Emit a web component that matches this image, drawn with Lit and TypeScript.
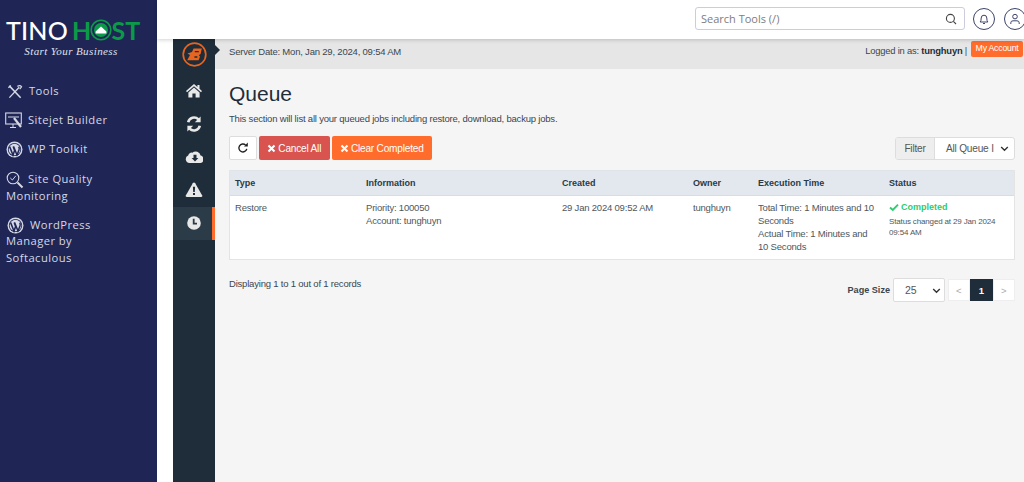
import { LitElement, html, css, svg } from "lit";
import { customElement } from "lit/decorators.js";

const wp = html`<svg class="ico" width="17" height="17" viewBox="0 0 17 17"><circle cx="8.5" cy="8.5" r="8" fill="#d5d8e6"/><circle cx="8.5" cy="8.5" r="6.6" fill="#1f2656" /><circle cx="8.5" cy="8.5" r="5.8" fill="#d5d8e6"/><path d="M3.6 5.6 L7 14 L8.6 9.4 L7.2 5.6 M7.6 5.6 L11 14 L13 9 Q13.6 7.4 12.8 5.6" fill="none" stroke="#1f2656" stroke-width="1.5"/></svg>`;

const home = svg`<path d="M9 2 L1 9 L2 10.2 L9 4.2 L16 10.2 L17 9 L14.5 6.8 V3 H12.4 V5 Z" fill="currentColor"/><path d="M9 5.6 L3.4 10.4 V15.5 H7.4 V11.5 H10.6 V15.5 H14.6 V10.4 Z" fill="currentColor"/>`;
const sync = svg`<path d="M3.2 7.2 A6 6 0 0 1 13.4 4.4" fill="none" stroke="currentColor" stroke-width="2.6"/><path d="M15.6 1.4 V7.2 H9.8 Z" fill="currentColor"/><path d="M14.8 10.8 A6 6 0 0 1 4.6 13.6" fill="none" stroke="currentColor" stroke-width="2.6"/><path d="M2.4 16.6 V10.8 H8.2 Z" fill="currentColor"/>`;
const cloud = svg`<path d="M4.4 15 A3.9 3.9 0 0 1 3.2 7.5 A3.4 3.4 0 0 1 7.4 4.7 A5 5 0 0 1 15.6 7.6 A3.8 3.8 0 0 1 15.6 15 Z" fill="currentColor"/><path d="M8.5 6.8 H11.5 V10 H13.4 L10 13.6 L6.6 10 H8.5 Z" fill="#1f2d3a"/>`;
const warn = svg`<path d="M9 1.5 Q9.8 1.5 10.2 2.2 L17.2 14.6 Q17.8 16 16.2 16 H1.8 Q0.2 16 0.8 14.6 L7.8 2.2 Q8.2 1.5 9 1.5 Z" fill="currentColor"/><path d="M7.9 5.8 H10.1 L9.8 11 H8.2 Z M8 12 H10 V14 H8 Z" fill="#1f2d3a"/>`;
const clock = svg`<circle cx="9" cy="9" r="6.8" fill="currentColor"/><path d="M8.7 4.8 V9.6 H12" fill="none" stroke="#2b3b48" stroke-width="1.8"/>`;
const s = (c: unknown) => html`<svg width="18" height="18" viewBox="0 0 18 18">${c}</svg>`;

@customElement("app-root")
export class AppRoot extends LitElement {
  static styles = css`
    :host { display: block; width: 1024px; height: 482px; overflow: hidden; font-family: "Liberation Sans", Arial, sans-serif; font-size: 9.5px; letter-spacing: -0.2px; color: #3a4650; background: #fff; }
    * { box-sizing: border-box; }
    .page { display: grid; grid-template-columns: 157px 1fr; height: 482px; }
    .side { background: #1f2656; color: #d5d8e6; font-family: "Open Sans", sans-serif; font-size: 11.2px; letter-spacing: 0.45px; padding: 18px 6px 0 6px; }
    .logo { display: flex; align-items: center; height: 24px; font-family: "Lato", "Open Sans", sans-serif; font-size: 25px; letter-spacing: 0.2px; line-height: 24px; white-space: nowrap; }
    .logo b { font-weight: 500; color: #fff; margin-right: 4px; }
    .logo i { font-style: normal; font-weight: 700; color: #0b9a48; }
    .logo svg { margin: 0 -1px; }
    .tag { font-family: "Liberation Serif", serif; font-style: italic; font-size: 11px; letter-spacing: 0.4px; color: #dfe2ec; text-align: center; padding: 3px 0 0 0; width: 130px; }
    .menu { display: flex; flex-direction: column; gap: 12.5px; margin-top: 26px; }
    .item { line-height: 16.5px; }
    .item.q { margin-top: 1px; }
    .ico { vertical-align: middle; margin: -3px 5px -2px 0; }
    .item .tl { margin: -3px 6px -2px 1px; }
    .item .sj { margin: -3px 5px -2px -1px; }
    .item .sq { margin: -3px 4px -2px 0; }
    .item.wpm { padding-right: 50px; }
    .item.wpm .ico { margin: -3px 6px -2px 1px; }
    .main { display: flex; flex-direction: column; min-width: 0; }
    .top { height: 39px; flex: none; background: #fff; display: flex; align-items: center; justify-content: flex-end; gap: 8px; padding: 0 0 2px 0; box-shadow: 0 1px 4px rgba(0,0,0,.18); position: relative; z-index: 2; }
    .search { width: 270px; height: 23px; border: 1px solid #ccd; border-radius: 3px; display: flex; align-items: center; justify-content: space-between; padding: 0 7px 0 5px; font-family: "Open Sans", sans-serif; font-size: 11px; letter-spacing: 0; color: #7d7d7d; }
    .rnd { width: 22px; height: 22px; border: 1px solid #3d4468; border-radius: 50%; display: flex; align-items: center; justify-content: center; color: #3d4468; flex: none; }
    .rnd.b { margin-right: 1px; }
    .rnd.u { margin-right: -2px; }
    .body { flex: 1; display: grid; grid-template-columns: 16px 42px 1fr; min-height: 0; }
    .nav { background: #1f2d3a; display: flex; flex-direction: column; color: #e8e8e8; }
    .brand { height: 29px; display: flex; align-items: center; justify-content: center; padding-top: 1px; }
    .nv { height: 33px; display: flex; align-items: center; justify-content: center; padding-bottom: 2px; }
    .nv.on { background: #2b3b48; border-right: 3px solid #ff6c2c; padding-left: 3px; padding-bottom: 1px; }
    .nav .gap { height: 7px; }
    .content { display: flex; flex-direction: column; background: #f5f5f5; min-width: 0; }
    .bar { height: 30px; flex: none; background: #e6e6e6; display: flex; justify-content: space-between; padding: 0 1px 0 14px; position: relative; line-height: 26px; }
    .bar::before { content: ""; position: absolute; left: 0; top: 6px; border: 5px solid transparent; border-left-color: #1f2d3a; }
    .acct { display: flex; align-items: flex-start; gap: 4px; padding-top: 2px; line-height: 19px; font-size: 9.4px; }
    .acct b { color: #1f2d3a; }
    .my { background: #ff6c2c; color: #fff; border-radius: 2px; padding: 0 4.5px; height: 15.5px; line-height: 15px; font-size: 8.7px; }
    .inner { padding: 11px 9px 0 14px; }
    h1 { margin: 0; font-weight: 400; font-size: 21px; letter-spacing: 0; line-height: 28px; color: #1f2d3a; }
    .desc { margin: 4px 0 0; line-height: 14px; }
    .tools { display: flex; justify-content: space-between; align-items: center; margin-top: 10px; height: 24px; }
    .btns { display: flex; gap: 2px; }
    .btn { height: 24px; border-radius: 2px; display: flex; align-items: center; justify-content: center; gap: 2px; color: #fff; font-size: 10.1px; }
    .btn.r { width: 28px; background: #fff; border: 1px solid #ddd; color: #222; }
    .btn.c { background: #d9534f; width: 70.5px; }
    .btn.o { background: #ff6c2c; width: 100.5px; }
    .filter { display: flex; height: 23px; width: 120px; border: 1px solid #ddd; border-radius: 3px; overflow: hidden; background: #fff; font-size: 10.1px; }
    .filter .l { width: 39px; background: #eee; border-right: 1px solid #ddd; text-align: center; line-height: 21px; color: #555; }
    .sel { flex: 1; display: flex; align-items: center; justify-content: space-between; color: #555; padding: 0 5px 0 11px; white-space: nowrap; overflow: hidden; }
    .card { margin-top: 10px; background: #fff; border: 1px solid #e4e4e4; border-top: 0; }
    .row { display: grid; grid-template-columns: 131px 196px 131px 65px 131px 1fr; padding-left: 5px; }
    .row.h { background: #e3e8ef; height: 26px; line-height: 24px; font-weight: 700; font-size: 9px; letter-spacing: 0; color: #2a3a46; border-bottom: 1px solid #d9dde3; border-top: 1px solid #e0e3e8; }
    .row.d { padding-top: 5px; height: 63px; line-height: 13px; color: #4d5860; }
    .exec { padding-right: 12px; }
    .ok { color: #2ecc71; font-weight: 700; letter-spacing: 0; font-size: 9px; display: flex; align-items: center; gap: 2px; }
    .small { font-size: 8px; letter-spacing: -0.15px; line-height: 11px; margin-top: 0; padding-top: 1.5px; }
    .foot { display: flex; justify-content: space-between; align-items: flex-start; margin-top: 12px; }
    .disp { line-height: 22px; margin-top: 1px; }
    .pg { display: flex; align-items: center; margin-top: 6px; }
    .pg b { font-size: 9.1px; letter-spacing: 0; margin-right: 3px; }
    .size { width: 52px; height: 24px; background: #fff; border: 1px solid #ddd; border-radius: 2px; display: flex; align-items: center; justify-content: space-between; padding: 0 3px 0 11px; margin-right: 2.5px; color: #555; font-size: 10.5px; letter-spacing: 0; }
    .p { width: 22.5px; height: 22.5px; background: #fff; border: 1px solid #eee; display: flex; align-items: center; justify-content: center; color: #aaa; font-size: 9.5px; }
    .p.on { background: #1f2d3a; color: #fff; border-color: #1f2d3a; font-weight: 700; }
  `;

  render() {
    const chev = html`<svg width="9" height="9" viewBox="0 0 9 9"><path d="M1.2 3 L4.5 6.2 L7.8 3" fill="none" stroke="#333" stroke-width="1.4"/></svg>`;
    const x = html`<svg width="9" height="9" viewBox="0 0 9 9"><path d="M1.5 1.5 L7.5 7.5 M7.5 1.5 L1.5 7.5" stroke="#fff" stroke-width="2.1"/></svg>`;
    return html`<div class="page">
      <aside class="side">
        <div class="logo"><b>TINO</b><i>H</i><svg width="22" height="22" viewBox="0 0 22 22"><circle cx="11" cy="11" r="9.8" fill="none" stroke="#0b9a48" stroke-width="1.6"/><circle cx="11" cy="11" r="7" fill="#0b9a48"/><path d="M5.6 12.5 L11 7.5 L16.4 12.5 V14.5 H5.6 Z" fill="#fff"/></svg><i>ST</i></div>
        <div class="tag">Start Your Business</div>
        <nav class="menu">
          <div class="item"><svg class="ico tl" width="16" height="16" viewBox="0 0 17 17" fill="none" stroke="#d5d8e6"><path d="M2.5 14.5 L13 3.5" stroke-width="1.4"/><path d="M2.5 2 L14.5 14.5" stroke-width="1.6"/><path d="M1.5 4 L4 1.5" stroke-width="1.5"/><path d="M11 2.5 Q14 0.8 15.5 3 L13.5 5.5" stroke-width="1.3"/></svg>Tools</div>
          <div class="item"><svg class="ico sj" width="18" height="18" viewBox="0 0 18 18" fill="none" stroke="#d5d8e6"><rect x="0.7" y="1" width="15.6" height="11" stroke-width="1.1"/><path d="M3 5 H14 M5 15.5 H11 M8 12 V15.5" stroke-width="1"/><path d="M9 6 L16 15" stroke-width="2.2"/></svg>Sitejet Builder</div>
          <div class="item">${wp}WP Toolkit</div>
          <div class="item q"><svg class="ico sq" width="18" height="18" viewBox="0 0 18 18" fill="none" stroke="#d5d8e6"><circle cx="7" cy="7" r="5.8" stroke-width="1.1"/><path d="M4.3 7 L6.4 9 L9.8 4.8" stroke-width="1"/><path d="M11.5 11.5 L16.5 16.5" stroke-width="2"/></svg>Site Quality Monitoring</div>
          <div class="item wpm">${wp}WordPress Manager by Softaculous</div>
        </nav>
      </aside>
      <div class="main">
        <header class="top">
          <div class="search"><span>Search Tools (/)</span><svg width="12" height="12" viewBox="0 0 12 12" fill="none" stroke="#444" stroke-width="1.1"><circle cx="5.4" cy="5.4" r="4"/><path d="M8.4 8.4 L11 11"/></svg></div>
          <div class="rnd b"><svg width="12" height="12" viewBox="0 0 12 12" fill="none" stroke="currentColor"><path d="M2.2 9 Q3.2 8 3.2 5 A2.8 2.8 0 0 1 8.8 5 Q8.8 8 9.8 9 Z M5 10.5 H7"/></svg></div>
          <div class="rnd u"><svg width="12" height="12" viewBox="0 0 12 12" fill="none" stroke="currentColor"><circle cx="6" cy="3.6" r="2.3"/><path d="M1.8 11 V9.8 Q1.8 7.8 4 7.8 H8 Q10.2 7.8 10.2 9.8 V11"/></svg></div>
        </header>
        <div class="body">
          <div></div>
          <nav class="nav">
            <div class="brand"><svg width="25" height="25" viewBox="0 0 25 25"><circle cx="12.5" cy="12.5" r="11.3" fill="none" stroke="#e8651f" stroke-width="1.7"/><path d="M5.2 18.2 L8 13 L5.4 11.6 L10 10 L11.6 6.6 L19.8 6.6 L18.6 12 L16.8 13.2 L18 14.4 L16.6 18.2 Z" fill="#e8651f"/><path d="M12.8 9.6 H16.8 M12.4 15 H15.4" stroke="#1f2d3a" stroke-width="1.3"/></svg></div>
            <div class="gap"></div>
            <div class="nv">${s(home)}</div>
            <div class="nv">${s(sync)}</div>
            <div class="nv">${s(cloud)}</div>
            <div class="nv">${s(warn)}</div>
            <div class="nv on">${s(clock)}</div>
          </nav>
          <section class="content">
            <div class="bar"><span>Server Date: Mon, Jan 29, 2024, 09:54 AM</span><div class="acct"><span>Logged in as: <b>tunghuyn</b> |</span><span class="my">My Account</span></div></div>
            <div class="inner">
              <h1>Queue</h1>
              <p class="desc">This section will list all your queued jobs including restore, download, backup jobs.</p>
              <div class="tools">
                <div class="btns">
                  <div class="btn r"><svg width="12" height="12" viewBox="0 0 12 12" fill="none" stroke="#222" stroke-width="1.4"><path d="M9.8 6.8 A4 4 0 1 1 8.6 3"/><path d="M10.8 0.6 V4.4 H7 Z" fill="#222" stroke="none"/></svg></div>
                  <div class="btn c">${x}Cancel All</div>
                  <div class="btn o">${x}Clear Completed</div>
                </div>
                <div class="filter"><div class="l">Filter</div><div class="sel"><span>All Queue I</span>${chev}</div></div>
              </div>
              <div class="card">
                <div class="row h"><span>Type</span><span>Information</span><span>Created</span><span>Owner</span><span>Execution Time</span><span>Status</span></div>
                <div class="row d">
                  <span>Restore</span>
                  <span>Priority: 100050<br>Account: tunghuyn</span>
                  <span>29 Jan 2024 09:52 AM</span>
                  <span>tunghuyn</span>
                  <span class="exec">Total Time: 1 Minutes and 10 Seconds<br>Actual Time: 1 Minutes and 10 Seconds</span>
                  <div><div class="ok"><svg width="10" height="9" viewBox="0 0 10 9"><path d="M1 4.5 L3.8 7 L9 1.6" fill="none" stroke="#2ecc71" stroke-width="1.9"/></svg>Completed</div><div class="small">Status changed at 29 Jan 2024 09:54 AM</div></div>
                </div>
              </div>
              <div class="foot">
                <div class="disp">Displaying 1 to 1 out of 1 records</div>
                <div class="pg"><b>Page Size</b><div class="size"><span>25</span>${chev}</div><div class="p">&lt;</div><div class="p on">1</div><div class="p">&gt;</div></div>
              </div>
            </div>
          </section>
        </div>
      </div>
    </div>`;
  }
}
